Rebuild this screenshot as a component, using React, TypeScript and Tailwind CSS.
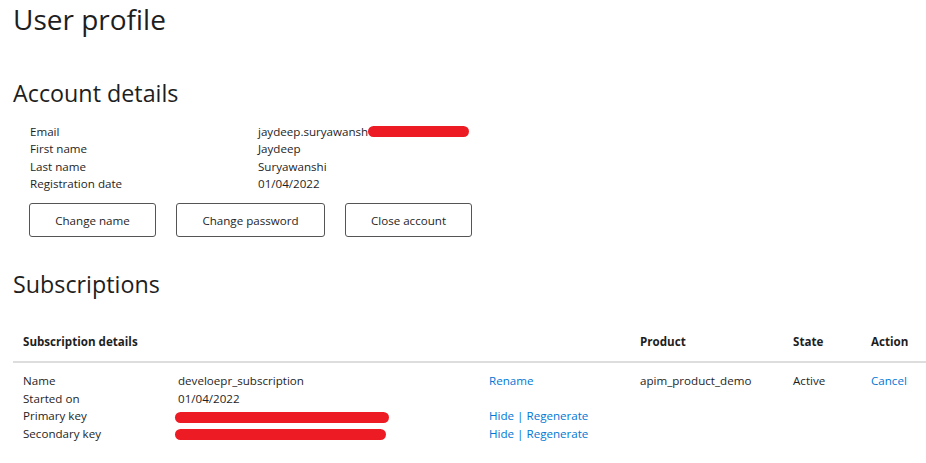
import React from "react";

const font = { fontFamily: '"Open Sans", "Noto Sans", sans-serif' };

function Redact({ w }: { w: number }) {
  return <span className="inline-block h-[11px] rounded-full bg-[#ed1c24] align-middle" style={{ width: w }} />;
}

function Btn({ children, w }: { children: React.ReactNode; w: string }) {
  return (
    <button className={`h-[34px] rounded-[3px] border border-[#555] bg-white text-[11.6px] text-[#1e1e1e] ${w}`}>
      {children}
    </button>
  );
}

export default function App() {
  return (
    <div className="h-[463px] w-[926px] overflow-hidden bg-white text-[#1e1e1e]" style={font}>
      <h1 className="pl-[13px] pt-[1px] text-[28px] leading-[36px] font-normal">User profile</h1>

      <h2 className="mt-[40px] pl-[13px] text-[23.3px] leading-[32px] font-normal">Account details</h2>

      <div className="mt-[14px] pl-[30px] text-[11.6px] leading-[17.3px]">
        <div className="grid grid-cols-[228px_1fr]">
          <span>Email</span>
          <span className="flex items-center">
            jaydeep.suryawansh
            <Redact w={101} />
          </span>
          <span>First name</span>
          <span>Jaydeep</span>
          <span>Last name</span>
          <span>Suryawanshi</span>
          <span>Registration date</span>
          <span>01/04/2022</span>
        </div>
        <div className="mt-[11px] flex gap-[20px]">
          <Btn w="w-[127px] -ml-[1px]">Change name</Btn>
          <Btn w="w-[149px]">Change password</Btn>
          <Btn w="w-[127px]">Close account</Btn>
        </div>
      </div>

      <h2 className="mt-[31px] pl-[13px] text-[23.3px] leading-[32px] font-normal">Subscriptions</h2>

      <div className="mt-[22px] ml-[13px] text-[11.6px]">
        <div className="grid h-[41px] grid-cols-[617px_153px_78px_1fr] items-center border-b-2 border-[#dddddd] font-bold">
          <span className="pl-[10px]">Subscription details</span>
          <span className="pl-[10px]">Product</span>
          <span className="pl-[10px]">State</span>
          <span className="pl-[10px]">Action</span>
        </div>
        <div className="grid grid-cols-[617px_153px_78px_1fr] pt-[9px] leading-[17.5px]">
          <div className="grid grid-cols-[155px_311px_1fr] pl-[10px]">
            <span>Name</span>
            <span>develoepr_subscription</span>
            <a className="text-[#0078d4]">Rename</a>
            <span>Started on</span>
            <span>01/04/2022</span>
            <span />
            <span>Primary key</span>
            <span className="flex items-center">
              <span className="-ml-[3px]">
                <Redact w={214} />
              </span>
            </span>
            <span className="text-[#0078d4]">Hide | Regenerate</span>
            <span>Secondary key</span>
            <span className="flex items-center">
              <span className="-ml-[3px]">
                <Redact w={211} />
              </span>
            </span>
            <span className="text-[#0078d4]">Hide | Regenerate</span>
          </div>
          <span className="pl-[10px]">apim_product_demo</span>
          <span className="pl-[10px]">Active</span>
          <a className="pl-[10px] text-[#0078d4]">Cancel</a>
        </div>
      </div>
    </div>
  );
}
